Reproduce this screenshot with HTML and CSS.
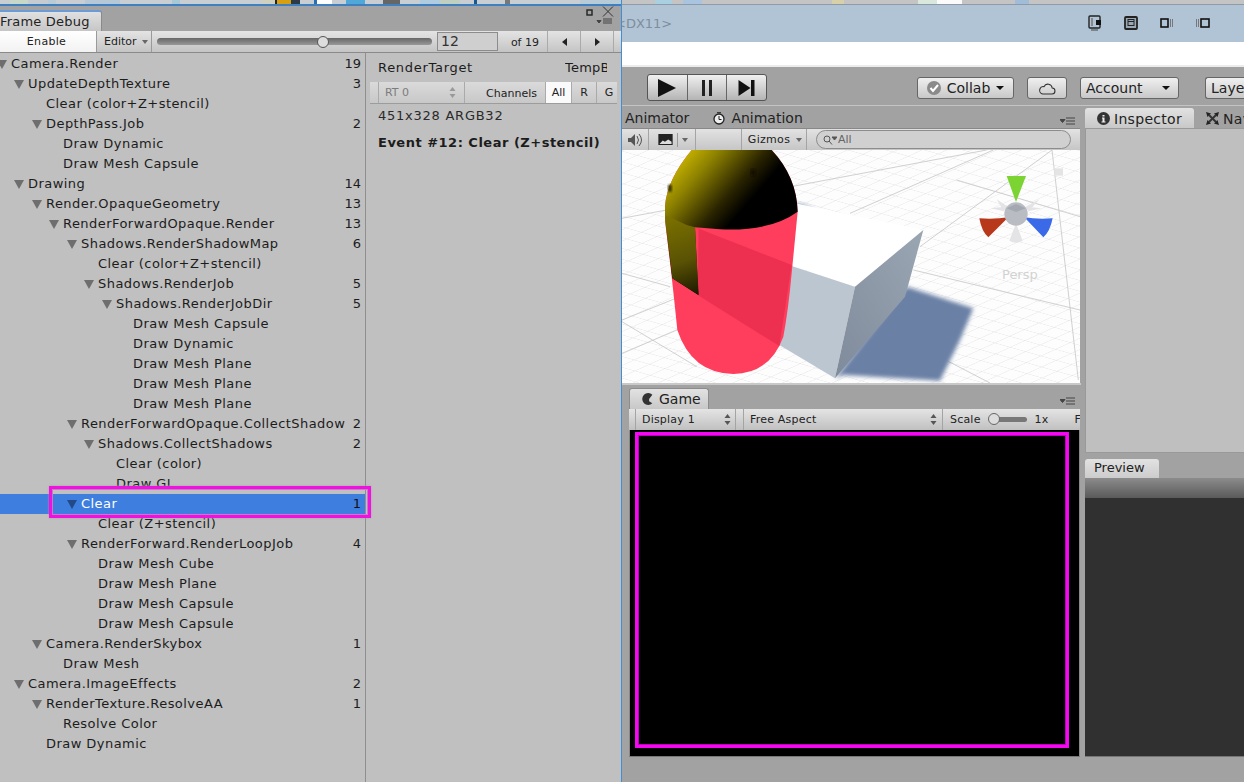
FILE: index.html
```html
<!DOCTYPE html>
<html lang="en">
<head>
<meta charset="utf-8">
<title>Frame Debug</title>
<link rel="stylesheet" href="styles.css">
</head>
<body>
<div class="desktop">
  <section class="fd">
    <div class="strip strip-l"></div>
    <div class="fd-title">
      <div class="fd-tab">Frame Debug</div>
      <div class="win-ctrls">
        <svg class="win-ic" width="32" height="20" viewBox="0 0 32 20"><rect x="2" y="4" width="5" height="5" fill="none" stroke="#222" stroke-width="1.4"/><path d="M18 .5l10 10M28 .5l-10 10" stroke="#333" stroke-width="1"/><path d="M12 14.500h4l-2 2.500zM18 13h9M18 15h9M18 17h9" fill="#444" stroke="#444" stroke-width="1"/></svg>
      </div>
    </div>
    <div class="fd-tools">
      <div class="btn-enable">Enable</div>
      <div class="btn-editor">Editor <i class="tri"></i></div>
      <div class="slider"><span class="track"></span><span class="thumb"></span></div>
      <div class="num">12</div>
      <div class="of">of 19</div>
      <div class="nav"><i class="tl"></i></div>
      <div class="nav"><i class="tr"></i></div>
    </div>
    <div class="fd-body">
      <div class="tree">
        <div class="row d0"><i class="ar"></i><span>Camera.Render</span><b>19</b></div>
        <div class="row d1"><i class="ar"></i><span>UpdateDepthTexture</span><b>3</b></div>
        <div class="row d2"><span>Clear (color+Z+stencil)</span></div>
        <div class="row d2"><i class="ar"></i><span>DepthPass.Job</span><b>2</b></div>
        <div class="row d3"><span>Draw Dynamic</span></div>
        <div class="row d3"><span>Draw Mesh Capsule</span></div>
        <div class="row d1"><i class="ar"></i><span>Drawing</span><b>14</b></div>
        <div class="row d2"><i class="ar"></i><span>Render.OpaqueGeometry</span><b>13</b></div>
        <div class="row d3"><i class="ar"></i><span>RenderForwardOpaque.Render</span><b>13</b></div>
        <div class="row d4"><i class="ar"></i><span>Shadows.RenderShadowMap</span><b>6</b></div>
        <div class="row d5"><span>Clear (color+Z+stencil)</span></div>
        <div class="row d5"><i class="ar"></i><span>Shadows.RenderJob</span><b>5</b></div>
        <div class="row d6"><i class="ar"></i><span>Shadows.RenderJobDir</span><b>5</b></div>
        <div class="row d7"><span>Draw Mesh Capsule</span></div>
        <div class="row d7"><span>Draw Dynamic</span></div>
        <div class="row d7"><span>Draw Mesh Plane</span></div>
        <div class="row d7"><span>Draw Mesh Plane</span></div>
        <div class="row d7"><span>Draw Mesh Plane</span></div>
        <div class="row d4"><i class="ar"></i><span>RenderForwardOpaque.CollectShadow</span><b>2</b></div>
        <div class="row d5"><i class="ar"></i><span>Shadows.CollectShadows</span><b>2</b></div>
        <div class="row d6"><span>Clear (color)</span></div>
        <div class="row d6"><span>Draw GL</span></div>
        <div class="row d4 sel"><i class="ar"></i><span>Clear</span><b>1</b></div>
        <div class="row d5"><span>Clear (Z+stencil)</span></div>
        <div class="row d4"><i class="ar"></i><span>RenderForward.RenderLoopJob</span><b>4</b></div>
        <div class="row d5"><span>Draw Mesh Cube</span></div>
        <div class="row d5"><span>Draw Mesh Plane</span></div>
        <div class="row d5"><span>Draw Mesh Capsule</span></div>
        <div class="row d5"><span>Draw Mesh Capsule</span></div>
        <div class="row d2"><i class="ar"></i><span>Camera.RenderSkybox</span><b>1</b></div>
        <div class="row d3"><span>Draw Mesh</span></div>
        <div class="row d1"><i class="ar"></i><span>Camera.ImageEffects</span><b>2</b></div>
        <div class="row d2"><i class="ar"></i><span>RenderTexture.ResolveAA</span><b>1</b></div>
        <div class="row d3"><span>Resolve Color</span></div>
        <div class="row d2"><span>Draw Dynamic</span></div>
        <div class="hl"></div>
      </div>
      <div class="detail">
        <div class="rt-line"><span>RenderTarget</span><span class="temp">TempBuffer</span></div>
        <div class="rt-bar">
          <div class="rt-pop">RT 0 <svg width="7" height="11" viewBox="0 0 7 11"><path d="M3.500 0l3 4h-6zM3.500 11l3-4h-6z" fill="#999"/></svg></div>
          <div class="rt-ch">Channels</div>
          <div class="rt-b on">All</div>
          <div class="rt-b">R</div>
          <div class="rt-b">G</div>
        </div>
        <div class="rt-size">451x328 ARGB32</div>
        <div class="rt-ev">Event #12: Clear (Z+stencil)</div>
      </div>
    </div>
  </section>

  <main class="main">
    <div class="strip strip-r"></div>
    <div class="titlebar">
      <span class="dx">&lt;DX11&gt;</span>
      <div class="tb-icons">
        <svg width="14" height="16" viewBox="0 0 14 16"><rect x="1" y="1" width="11" height="12" rx="1" fill="none" stroke="#222" stroke-width="1.4"/><path d="M4 3v8" stroke="#888" stroke-width="2"/><rect x="8" y="5" width="5" height="5" fill="#111"/><path d="M3 15h7" stroke="#444"/></svg>
        <svg width="14" height="14" viewBox="0 0 14 14"><rect x="1" y="1" width="12" height="12" rx="1" fill="#9aa8b4" stroke="#222" stroke-width="1.8"/><rect x="4" y="3.500" width="6" height="6" fill="none" stroke="#222"/><path d="M4 5.500h6" stroke="#222"/></svg>
        <svg width="14" height="10" viewBox="0 0 14 10"><rect x="1" y="1" width="7" height="8" fill="none" stroke="#111" stroke-width="1.6"/><path d="M10.500 1v8M12.500 1v8" stroke="#777"/></svg>
        <svg width="14" height="10" viewBox="0 0 14 10"><path d="M.5 1v8M2.500 1v8" stroke="#777"/><rect x="5" y="1" width="8" height="8" fill="none" stroke="#111" stroke-width="1.6"/></svg>
      </div>
    </div>
    <div class="whitebar"></div>
    <div class="toolbar">
      <div class="play">
        <div class="pb"><svg width="18" height="18" viewBox="0 0 16 16"><path d="M0 0l16 8-16 8z" fill="#111"/></svg></div>
        <div class="pb"><svg width="10" height="16" viewBox="0 0 10 16"><path d="M0 0h3v16H0zM7 0h3v16H7z" fill="#222"/></svg></div>
        <div class="pb"><svg width="19" height="16" viewBox="0 0 16 16"><path d="M0 0l12 8-12 8zM12.500 0H16v16h-3.500z" fill="#111"/></svg></div>
      </div>
      <div class="tbtn collab"><svg width="14" height="14" viewBox="0 0 14 14"><circle cx="7" cy="7" r="7" fill="#8a8a8a"/><path d="M3.500 7l2.500 3 5-6" fill="none" stroke="#fff" stroke-width="2"/></svg><span>Collab</span><i class="tri dk"></i></div>
      <div class="tbtn cloud"><svg width="18" height="13" viewBox="0 0 16 12"><path d="M4 11h8.500a2.700 2.700 0 0 0 .3-5.400A4 4 0 0 0 5.200 4.300 3.400 3.400 0 0 0 4 11z" fill="none" stroke="#333"/></svg></div>
      <div class="tbtn account"><span>Account</span><i class="tri dk"></i></div>
      <div class="tbtn layers"><span>Layers</span></div>
    </div>
    <div class="panes">
      <div class="left-col">
        <div class="tabs-scene">
          <span class="tl-animator">Animator</span>
          <span class="tl-anim"><svg width="12" height="13" viewBox="0 0 12 13"><circle cx="6" cy="7" r="5" fill="#eee" stroke="#222" stroke-width="1.300"/><path d="M6 4v3.500h2.500M4 .7h4" fill="none" stroke="#222"/></svg>Animation</span>
          <svg class="menu-ic" width="16" height="8" viewBox="0 0 16 8"><path d="M0 2.500h5l-2.500 3zM6 1h9M6 4h9M6 7h9" fill="#444" stroke="#444"/></svg>
        </div>
        <div class="scene-tools">
          <div class="st st-audio"><svg width="15" height="14" viewBox="0 0 15 14"><path d="M0 5h3l4-4v12L3 9H0z" fill="#555"/><path d="M9 3q3 4 0 8M11 1q5 6 0 12" fill="none" stroke="#555"/></svg></div>
          <div class="st st-img"><svg width="15" height="11" viewBox="0 0 13 10"><rect width="13" height="10" fill="#222"/><path d="M1 9l3-3 2 1 3-2 3 2v2z" fill="#ddd"/></svg><i class="st-sep"></i><i class="tri"></i></div>
          <div class="st st-blank"></div>
          <div class="st st-gizmos">Gizmos <i class="tri"></i></div>
          <div class="search"><svg width="14" height="10" viewBox="0 0 14 10"><circle cx="4" cy="4" r="3" fill="none" stroke="#555"/><path d="M6 6l3 3.500M9 2h5l-2.500 3z" stroke="#555" fill="#555"/></svg><span>All</span></div>
        </div>
        <div class="scene">
          <svg class="scene-svg" viewBox="6 30 1374 699" preserveAspectRatio="none">
            <defs>
              <pattern id="cells" width="10" height="10" patternUnits="userSpaceOnUse" patternTransform="matrix(4.600 1.300 4.400 -2 0 0)">
                <path d="M0 0H10M0 0V10" fill="none" stroke="#d4d4d4" stroke-width=".5"/>
              </pattern>
              <linearGradient id="dome" gradientUnits="userSpaceOnUse" x1="200" y1="30" x2="430" y2="230"><stop offset="0" stop-color="#c8b400"/><stop offset=".25" stop-color="#8c8000"/><stop offset=".6" stop-color="#2a2400"/><stop offset=".8" stop-color="#000"/></linearGradient>
              <linearGradient id="strip-y" gradientUnits="userSpaceOnUse" x1="160" y1="230" x2="235" y2="465"><stop offset="0" stop-color="#7a7000"/><stop offset=".55" stop-color="#5a5204"/><stop offset="1" stop-color="#1a1800"/></linearGradient>
              <linearGradient id="rface" x1="0" y1="1" x2="1" y2="0"><stop offset="0" stop-color="#7f8b9b"/><stop offset="1" stop-color="#9aa6b2"/></linearGradient>
              <filter id="soft"><feGaussianBlur stdDeviation="6"/></filter>
              <filter id="spot"><feGaussianBlur stdDeviation="3"/></filter>
            </defs>
            <rect x="0" y="0" width="1380" height="750" fill="#fdfdfd"/>
            <rect x="0" y="0" width="1380" height="750" fill="url(#cells)"/>
            <g class="grid-major">
              <path d="M6 235L1100 30M6 640L230 545M690 220L1120 30M900 320L1296 30M1296 30L1375 720M6 540L230 450"/>
              <path d="M880 390L1380 510M6 545L230 680M900 620L1110 729M1010 120L1380 230M6 400L150 440"/>
            </g>
            <path d="M525 190Q590 205 590 222Q570 245 525 250z" fill="#6c85ac" filter="url(#soft)"/>
            <path d="M860 440L1060 505L1020 600L960 722L670 705L645 715z" fill="#6a80a5" filter="url(#soft)"/>
            <path d="M525 190L910 270L705 440L515 375z" fill="#fff"/>
            <path d="M515 378L705 440L645 715L478 615z" fill="#bcc6d0"/>
            <path d="M705 440L910 270L855 470L645 715z" fill="url(#rface)"/>
            <path d="M135 200Q140 120 215 30H455Q530 110 533 215L515 400Q505 510 490 590Q450 700 340 702Q215 700 172 570Q165 500 155 410L135 240z" fill="#ff3d5c"/>
            <path d="M233 465L236 265L225 262L515 375L478 618L233 465z" fill="#ee3050"/>
            <path d="M135 200Q140 120 215 30H455Q530 110 533 215Q450 275 300 268L225 262L235 465L157 415L135 240z" fill="url(#dome)"/>
            <path d="M157 415L136 225L200 255L225 262L236 465z" fill="url(#strip-y)"/>
            <ellipse cx="150" cy="145" rx="6" ry="12" fill="#3a3400" filter="url(#spot)"/>
            <ellipse cx="400" cy="98" rx="8" ry="11" fill="#141000" filter="url(#spot)"/>
            <g class="gizmo">
              <path d="M1160 108H1218L1188 186z" fill="#7cd432"/>
              <path d="M1078 235Q1125 238 1165 232L1105 292Q1085 275 1078 235z" fill="#b8381c"/>
              <path d="M1298 235Q1250 238 1213 232L1270 292Q1290 275 1298 235z" fill="#3a6ae8"/>
              <path d="M1130 178L1170 205L1150 212zM1258 178L1208 205L1228 212zM1112 205L1155 200L1152 214zM1264 205L1222 200L1225 214zM1168 302L1188 250L1208 302Q1188 314 1168 302z" fill="#e4e4e7"/>
              <circle cx="1188" cy="222" r="35" fill="#b9bcc3"/>
              <path d="M1160 205L1188 192L1217 205L1188 216z" fill="#a4a8b0"/>
            </g>
            <rect x="1303" y="85" width="26" height="22" fill="#e4e4e4"/>
          </svg>
          <span class="persp">Persp</span>
        </div>
        <div class="sep-game"></div>
        <div class="tabs-game">
          <div class="game-tab"><svg width="12" height="12" viewBox="0 0 10 11"><path d="M9 1.500A5.500 5.500 0 1 0 9 9.500L6 7.500V5.500z" fill="#333"/></svg><span>Game</span></div>
          <svg class="menu-ic" width="16" height="8" viewBox="0 0 16 8"><path d="M0 2.500h5l-2.500 3zM6 1h9M6 4h9M6 7h9" fill="#444" stroke="#444"/></svg>
        </div>
        <div class="game-tools">
          <div class="gt g-dis"><span>Display 1</span><svg width="7" height="11" viewBox="0 0 7 11"><path d="M3.500 0l3 4h-6zM3.500 11l3-4h-6z" fill="#555"/></svg></div>
          <div class="gt g-asp"><span>Free Aspect</span><svg width="7" height="11" viewBox="0 0 7 11"><path d="M3.500 0l3 4h-6zM3.500 11l3-4h-6z" fill="#555"/></svg></div>
          <div class="g-scale"><span>Scale</span><div class="mini-slider"><i></i></div><span class="x1">1x</span><span class="g-f">F</span></div>
        </div>
        <div class="game-view"><div class="game-frame"></div></div>
      </div>
      <div class="right-col">
        <div class="insp-tabs">
          <div class="insp-tab"><svg width="13" height="13" viewBox="0 0 13 13"><circle cx="6.500" cy="6.500" r="6.500" fill="#333"/><path d="M5.500 3h2v1.500h-2zM5 5.500h2.500V9.500H8.500V10.500H4.500V9.500H5.500V6.500H5z" fill="#eee"/></svg><span>Inspector</span></div>
          <div class="nav-tab"><svg width="13" height="13" viewBox="0 0 13 13"><path d="M0 0l5 1.500L1.500 5zM13 0L8 1.500 11.500 5zM0 13l5-1.500L1.500 8zM13 13l-5-1.500L11.500 8z" fill="#222"/><path d="M3 3l7 7M10 3l-7 7" stroke="#333" stroke-width="2"/></svg><span>Navigation</span></div>
        </div>
        <div class="insp-body"></div>
        <div class="prev-tabs"><div class="prev-tab">Preview</div></div>
        <div class="prev-head"></div>
        <div class="prev-body"></div>
      </div>
    </div>
  </main>
</div>
</body>
</html>
```
FILE: styles.css
```css
* { box-sizing: border-box; }
html, body { margin: 0; padding: 0; width: 1244px; height: 782px; overflow: hidden; }
body { font-family: "DejaVu Sans", sans-serif; font-size: 13px; color: #1c1c1c; background: #a2a2a2; }
i { display: block; }
.desktop { display: flex; width: 1244px; height: 782px; }
.strip { flex: none; }
.strip-l { height: 4px; background: linear-gradient(90deg, #c8ced2 0 10px, #c8d8c8 10px 28px, #c4ccd2 28px 48px, #b8ccd8 48px 56px, #c8ced2 56px 85px, #b4c8d8 85px 120px, #c8ced2 120px 172px, #a8c8d8 172px 180px, #c8ced2 180px 262px, #d0d0c0 262px 275px, #222 275px 277px, #d8a010 277px 291px, #2c3a48 291px 300px, #c8ced2 300px 314px, #2a70b0 314px 317px, #fff 317px 332px, #c8ced2 332px 346px, #50a8d8 346px 365px, #c8ced2 365px 383px, #666 383px 400px, #c8ced2 400px 420px, #b0cce0 420px 440px, #c0d0c0 440px 460px, #c8ced2 460px 474px, #1a5890 474px 477px, #c8ced2 477px 505px, #777 505px 510px, #c8ced2 510px 580px, #b8ccd8 580px 622px); }
.strip-r { height: 5px; border-bottom: 1px solid #8e9aa6; background: linear-gradient(90deg, #c4c4c4 0 33px, #a8d0e0 33px 50px, #c4c4c4 50px 61px, #a8c4e0 61px 80px, #c4c4c4 80px 210px, #d8d0a8 210px 222px, #c4c4c4 222px 296px, #d8e8dc 296px 315px, #fbfbfb 315px 340px, #c4c4c4 340px 393px, #a0bcd8 393px 407px, #c4c4c4 407px); }

/* Frame debugger window */
.fd { width: 622px; flex: none; display: flex; flex-direction: column; border-right: 1px solid #3f8fd8; position: relative; z-index: 1; }
.fd-title { height: 27px; flex: none; background: #a2a2a2; border-top: 2px solid #4080c0; display: flex; justify-content: space-between; }
.fd-tab { margin-top: 4px; width: 102px; height: 21px; background: linear-gradient(#e0e0e0, #c6c6c6); border-top: 2px solid #6a9ad8; border-right: 1px solid #8a8a8a; border-radius: 0 3px 0 0; line-height: 20px; white-space: nowrap; color: #222; letter-spacing: .2px; }
.win-ic { margin: 0 4px 0 0; }
.fd-tools { height: 22px; flex: none; display: flex; align-items: stretch; background: linear-gradient(#e4e4e4, #c4c4c4); border-bottom: 1px solid #8a8a8a; font-size: 11px; }
.btn-enable { width: 97px; padding-right: 3px; background: linear-gradient(#fff, #f2f2f2); text-align: center; line-height: 21px; color: #222; border-right: 1px solid #9a9a9a; letter-spacing: .3px; }
.btn-editor { width: 55px; padding-left: 7px; line-height: 21px; border-right: 1px solid #9a9a9a; display: flex; align-items: center; gap: 5px; color: #222; flex: none; }
.tri { width: 0; height: 0; border-left: 3px solid transparent; border-right: 3px solid transparent; border-top: 4px solid #666; flex: none; }
.tri.dk { border-left-width: 4px; border-right-width: 4px; border-top-color: #111; }
.slider { position: relative; width: 285px; flex: none; display: flex; align-items: center; padding: 0 5px; }
.track { display: block; width: 100%; height: 7px; border-radius: 4px; background: linear-gradient(#666, #999); }
.thumb { position: absolute; left: 165px; top: 5px; width: 12px; height: 12px; border-radius: 50%; background: #ddd; border: 1px solid #555; }
.num { width: 61px; height: 19px; margin: 1px 0 0 0; background: #cfcfcf; border: 1px solid #8c8c8c; font-size: 14px; line-height: 16px; padding-left: 3px; color: #333; flex: none; }
.of { width: 50px; text-align: right; padding-right: 8px; line-height: 24px; color: #222; border-right: 1px solid #aaa; flex: none; }
.nav { width: 33px; display: flex; align-items: center; justify-content: center; border-right: 1px solid #aaa; flex: none; }
.tl { border-top: 4px solid transparent; border-bottom: 4px solid transparent; border-right: 5px solid #222; }
.tr { border-top: 4px solid transparent; border-bottom: 4px solid transparent; border-left: 5px solid #222; }
.fd-body { flex: 1; display: flex; background: #c0c0c0; min-height: 0; }
.tree { position: relative; width: 366px; flex: none; padding-top: 1px; border-right: 1px solid #8f8f8f; }
.row { position: relative; height: 20px; padding-right: 14px; line-height: 20px; white-space: nowrap; color: #1c1c1c; letter-spacing: .45px; }
.row span { display: block; overflow: hidden; }
.row b { position: absolute; right: 4px; top: 0; font-weight: 400; letter-spacing: 0; }
.ar { position: absolute; top: 6px; width: 0; height: 0; border-left: 5px solid transparent; border-right: 5px solid transparent; border-top: 9px solid #6e6e6e; margin-left: -14px; }
.d0 { padding-left: 11px; } .d1 { padding-left: 28px; } .d2 { padding-left: 46px; } .d3 { padding-left: 63px; }
.d4 { padding-left: 81px; } .d5 { padding-left: 98px; } .d6 { padding-left: 116px; } .d7 { padding-left: 133px; }
.sel { background: #3e7ede; }
.sel span { color: #fff; }
.sel b { color: #111; }
.sel .ar { border-top-color: #234a86; }
.hl { position: absolute; left: 49px; top: 433px; width: 322px; height: 32px; border: 3px solid #f010e0; box-shadow: 0 0 2px #a0a0a0, inset 0 0 0 1px #c878c8; }
.detail { flex: 1; min-width: 0; padding: 5px 4px 0 4px; overflow: hidden; }
.rt-line { display: flex; justify-content: space-between; padding: 0 10px 0 8px; line-height: 20px; height: 24px; letter-spacing: .7px; }
.temp { width: 42px; overflow: hidden; white-space: nowrap; letter-spacing: .2px; }
.rt-bar { display: flex; height: 22px; align-items: stretch; background: linear-gradient(#dadada, #c8c8c8); border-bottom: 1px solid #9c9c9c; font-size: 11px; }
.rt-pop { width: 87px; margin-left: 8px; padding: 0 8px 0 6px; color: #7c7c7c; border-left: 1px solid #aaa; border-right: 1px solid #aaa; display: flex; align-items: center; justify-content: space-between; flex: none; }
.rt-ch { width: 81px; padding-right: 8px; text-align: right; line-height: 24px; border-right: 1px solid #aaa; color: #222; flex: none; }
.rt-b { width: 25px; text-align: center; line-height: 22px; border-right: 1px solid #aaa; color: #222; flex: none; }
.rt-b.on { background: #fafafa; width: 26px; }
.rt-size { padding-left: 8px; line-height: 20px; margin-top: 2px; color: #2a2a2a; letter-spacing: .75px; }
.rt-ev { padding-left: 8px; font-weight: 700; line-height: 20px; margin-top: 7px; color: #1c1c1c; white-space: nowrap; letter-spacing: .5px; }

/* Main window */
.main { flex: 1; min-width: 0; display: flex; flex-direction: column; overflow: hidden; }
.titlebar { height: 37px; flex: none; background: #b0c4d6; display: flex; align-items: center; justify-content: space-between; }
.dx { margin-left: -7px; color: #7f8e9c; font-size: 13px; }
.tb-icons { display: flex; align-items: center; gap: 22px; margin-right: 34px; margin-top: -2px; }
.whitebar { height: 25px; flex: none; background: #fff; border-bottom: 2px solid #ececec; }
.toolbar { height: 39px; flex: none; background: #a2a2a2; display: flex; align-items: flex-start; border-bottom: 1px solid #c4c4c4; }
.play { margin: 7px 0 0 25px; display: flex; width: 120px; height: 27px; border: 1px solid #555; border-radius: 3px; background: linear-gradient(#f0f0f0, #b4b4b4); flex: none; }
.pb { flex: 1; display: flex; align-items: center; justify-content: center; border-right: 1px solid #666; }
.pb:last-child { border: 0; }
.tbtn { height: 22px; margin-top: 10px; border: 1px solid #666; border-radius: 3px; background: linear-gradient(#f0f0f0, #c8c8c8); display: flex; align-items: center; font-size: 14px; flex: none; color: #222; }
.collab { margin-left: 150px; width: 97px; padding: 0 9px 0 9px; gap: 4px; justify-content: space-between; }
.cloud { margin-left: 13px; width: 40px; justify-content: center; }
.account { margin-left: 13px; width: 99px; padding: 0 8px 0 5px; justify-content: space-between; }
.layers { margin-left: 26px; width: 60px; padding-left: 5px; border-right: 0; border-radius: 3px 0 0 3px; overflow: hidden; }
.panes { flex: 1; display: flex; min-height: 0; background: #a2a2a2; }
.left-col { width: 459px; flex: none; display: flex; flex-direction: column; }
.tabs-scene { position: relative; height: 22px; flex: none; display: flex; align-items: center; font-size: 14px; padding: 2px 0 0 3px; color: #222; }
.tl-anim { display: flex; align-items: center; gap: 6px; margin-left: 24px; }
.menu-ic { position: absolute; right: 5px; top: 11px; }
.scene-tools { height: 22px; flex: none; display: flex; align-items: stretch; background: linear-gradient(#e2e2e2, #c6c6c6); font-size: 11px; border-top: 1px solid #888; color: #222; margin-right: 1px; }
.st { display: flex; align-items: center; justify-content: center; border-right: 1px solid #a4a4a4; flex: none; }
.st-audio { width: 27px; }
.st-img { width: 47px; gap: 4px; justify-content: flex-start; padding-left: 9px; }
.st-sep { width: 1px; height: 14px; background: #999; }
.st-blank { width: 46px; }
.st-gizmos { width: 65px; gap: 6px; padding-left: 2px; letter-spacing: .3px; }
.search { margin: 1px 0 1px 9px; width: 255px; border: 1px solid #8c8c8c; border-radius: 10px; background: #d0d0d0; display: flex; align-items: center; padding-left: 6px; font-size: 11px; color: #666; gap: 1px; flex: none; }
.scene { position: relative; height: 233px; flex: none; overflow: hidden; margin-right: 1px; }
.scene-svg { display: block; width: 100%; height: 100%; }
.grid-major path { fill: none; stroke: #c8c8c8; stroke-width: 2.500; }
.persp { position: absolute; left: 380px; top: 117px; font-size: 13px; color: #d2d2d2; }
.sep-game { height: 2px; flex: none; background: #c8c8c8; }
.tabs-game { position: relative; height: 24px; flex: none; }
.tabs-game .menu-ic { top: 12px; }
.game-tab { position: absolute; left: 7px; top: 3px; width: 80px; height: 21px; background: linear-gradient(#e2e2e2, #c8c8c8); border-radius: 3px 3px 0 0; border: 1px solid #8c8c8c; border-bottom: 0; display: flex; align-items: center; gap: 5px; padding-left: 12px; font-size: 14px; color: #222; }
.game-tools { height: 21px; margin: 0 1px 0 7px; flex: none; display: flex; background: linear-gradient(#e4e4e4, #c0c0c0); font-size: 11px; color: #222; letter-spacing: .2px; overflow: hidden; }
.gt { display: flex; align-items: center; justify-content: space-between; padding: 0 4px 0 6px; border-left: 1px solid #a4a4a4; border-right: 1px solid #a4a4a4; flex: none; height: 100%; }
.g-dis { margin-left: 6px; width: 101px; }
.g-asp { margin-left: 7px; width: 200px; padding: 0 5px 0 6px; }
.g-scale { display: flex; align-items: center; padding-left: 7px; white-space: nowrap; }
.mini-slider { position: relative; width: 33px; height: 5px; margin: 0 8px 0 13px; background: #777; border-radius: 3px; }
.mini-slider i { position: absolute; left: -6px; top: -4px; width: 12px; height: 12px; border: 1px solid #666; background: #ddd; border-radius: 50%; }
.g-f { margin-left: 26px; }
.game-view { height: 327px; flex: none; margin: 0 1px 0 7px; background: #000; border-right: 1px solid #888; border-left: 1px solid #888; border-bottom: 1px solid #777; padding: 2px 10px 0 5px; }
.game-frame { height: 316px; border: 3px solid #f408f0; box-shadow: inset 0 0 0 1px #c000c0; }
.right-col { flex: 1; min-width: 0; display: flex; flex-direction: column; padding-left: 4px; overflow: hidden; }
.insp-tabs { height: 22px; flex: none; display: flex; align-items: flex-end; font-size: 14px; color: #222; letter-spacing: .3px; }
.insp-tab { width: 109px; height: 20px; display: flex; align-items: center; gap: 4px; padding: 1px 0 0 12px; background: linear-gradient(#e2e2e2, #c8c8c8); border-radius: 3px 3px 0 0; flex: none; }
.nav-tab { display: flex; align-items: center; gap: 4px; height: 20px; padding-top: 1px; margin-left: 12px; white-space: nowrap; }
.insp-body { height: 325px; flex: none; background: #bfbfbf; border: 1px solid #9a9a9a; border-right: 0; }
.prev-tabs { height: 25px; flex: none; display: flex; align-items: flex-end; }
.prev-tab { width: 74px; height: 19px; background: linear-gradient(#e2e2e2, #cccccc); border-radius: 3px 3px 0 0; padding-left: 9px; line-height: 18px; color: #222; }
.prev-head { height: 20px; flex: none; background: linear-gradient(#8c8c8c, #5a5a5a); }
.prev-body { height: 259px; flex: none; background: #303030; border-bottom: 1px solid #777; }
```
